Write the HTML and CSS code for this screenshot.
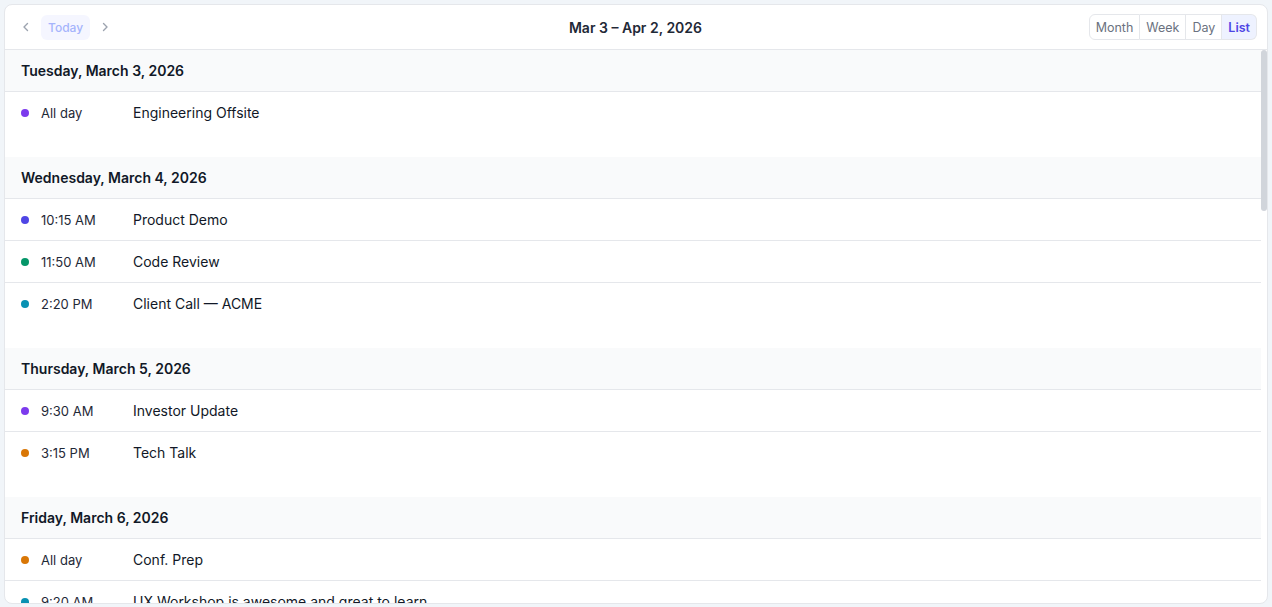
FILE: index.html
```html
<!DOCTYPE html>
<html lang="en">
<head>
    <meta charset="UTF-8">
    <meta name="viewport" content="width=device-width, initial-scale=1.0">
    <title>Calendar List</title>
    <link rel="stylesheet" href="styles.css">
</head>
<body>
    <div class="calendar">
        <div class="toolbar">
            <div class="nav">
                <button class="nav-arrow" aria-label="Previous">
                    <svg width="10" height="10" viewBox="0 0 10 10"><polyline points="6.5,1.5 3,5 6.5,8.5" fill="none" stroke="currentColor" stroke-width="1.4" stroke-linecap="round" stroke-linejoin="round"/></svg>
                </button>
                <button class="today" disabled>Today</button>
                <button class="nav-arrow" aria-label="Next">
                    <svg width="10" height="10" viewBox="0 0 10 10"><polyline points="3.5,1.5 7,5 3.5,8.5" fill="none" stroke="currentColor" stroke-width="1.4" stroke-linecap="round" stroke-linejoin="round"/></svg>
                </button>
            </div>
            <h1 class="range">Mar 3 – Apr 2, 2026</h1>
            <div class="views">
                <button>Month</button>
                <button>Week</button>
                <button>Day</button>
                <button class="active">List</button>
            </div>
        </div>

        <div class="body">
            <div class="list">
                <section class="day">
                    <h2 class="day-title">Tuesday, March 3, 2026</h2>
                    <div class="event">
                        <span class="dot purple"></span>
                        <span class="time">All day</span>
                        <span class="name">Engineering Offsite</span>
                    </div>
                </section>

                <section class="day">
                    <h2 class="day-title">Wednesday, March 4, 2026</h2>
                    <div class="event">
                        <span class="dot indigo"></span>
                        <span class="time">10:15 AM</span>
                        <span class="name">Product Demo</span>
                    </div>
                    <div class="event">
                        <span class="dot green"></span>
                        <span class="time">11:50 AM</span>
                        <span class="name">Code Review</span>
                    </div>
                    <div class="event">
                        <span class="dot cyan"></span>
                        <span class="time">2:20 PM</span>
                        <span class="name">Client Call — ACME</span>
                    </div>
                </section>

                <section class="day">
                    <h2 class="day-title">Thursday, March 5, 2026</h2>
                    <div class="event">
                        <span class="dot purple"></span>
                        <span class="time">9:30 AM</span>
                        <span class="name">Investor Update</span>
                    </div>
                    <div class="event">
                        <span class="dot amber"></span>
                        <span class="time">3:15 PM</span>
                        <span class="name">Tech Talk</span>
                    </div>
                </section>

                <section class="day">
                    <h2 class="day-title">Friday, March 6, 2026</h2>
                    <div class="event">
                        <span class="dot amber"></span>
                        <span class="time">All day</span>
                        <span class="name">Conf. Prep</span>
                    </div>
                    <div class="event">
                        <span class="dot cyan"></span>
                        <span class="time">9:20 AM</span>
                        <span class="name">UX Workshop is awesome and great to learn</span>
                    </div>
                    <div class="event">
                        <span class="dot indigo"></span>
                        <span class="time">1:00 PM</span>
                        <span class="name">Sprint Planning</span>
                    </div>
                </section>
            </div>
            <div class="scrollbar"><div class="thumb"></div></div>
        </div>
    </div>
</body>
</html>
```

FILE: styles.css
```css
* {
    margin: 0;
    padding: 0;
    box-sizing: border-box;
    font-family: Inter, 'Noto Sans', sans-serif;
}

html, body {
    height: 100%;
}

body {
    background-color: #f1f5f9;
    color: #111827;
    padding: 4px 4px 3px 4px;
}

.calendar {
    height: 100%;
    display: flex;
    flex-direction: column;
    background-color: #ffffff;
    border: 1px solid #e5e7eb;
    border-radius: 8px;
    overflow: hidden;
}

.toolbar {
    flex: none;
    height: 45px;
    display: flex;
    align-items: center;
    justify-content: space-between;
    padding: 0 10px 0 9px;
    border-bottom: 1px solid #e5e7eb;
}

.nav {
    display: flex;
    align-items: center;
    gap: 3px;
    width: 200px;
}

button {
    font-family: inherit;
    border: none;
    background: none;
    cursor: pointer;
}

.nav-arrow {
    width: 24px;
    height: 25px;
    display: flex;
    align-items: center;
    justify-content: center;
    color: #9ca3af;
}

.today {
    height: 25px;
    padding: 0 7px;
    border-radius: 6px;
    background-color: #f5f6ff;
    color: #a5b4fc;
    font-size: 12px;
    font-weight: 500;
    cursor: default;
}

.range {
    font-size: 14px;
    font-weight: 600;
    color: #1f2937;
    text-align: center;
}

.views {
    width: 200px;
    display: flex;
    justify-content: flex-end;
}

.views button {
    height: 26px;
    padding: 0 6px;
    font-size: 12.5px;
    color: #6b7280;
    border: 1px solid #e5e7eb;
    border-left: none;
    background-color: #ffffff;
}

.views button:first-child {
    border-left: 1px solid #e5e7eb;
    border-radius: 6px 0 0 6px;
}

.views button:last-child {
    border-radius: 0 6px 6px 0;
}

.views button.active {
    background-color: #eef2ff;
    color: #4f46e5;
    font-weight: 600;
}

.body {
    flex: 1;
    min-height: 0;
    display: flex;
}

.list {
    flex: 1;
    overflow: hidden;
}

.scrollbar {
    flex: none;
    width: 6px;
}

.thumb {
    height: 161px;
    background-color: #d1d5db;
    border-radius: 3px;
}

.day {
    padding-bottom: 24px;
}

.day-title {
    height: 42px;
    display: flex;
    align-items: center;
    padding-left: 16px;
    background-color: #f9fafb;
    border-bottom: 1px solid #e5e7eb;
    font-size: 14px;
    font-weight: 600;
    color: #111827;
}

.event {
    height: 42px;
    display: flex;
    align-items: center;
    padding-left: 16px;
    border-bottom: 1px solid #e5e7eb;
}

.event:last-child {
    border-bottom: none;
    height: 41px;
}

.dot {
    width: 8px;
    height: 8px;
    border-radius: 50%;
    margin-right: 12px;
    flex: none;
}

.purple { background-color: #7c3aed; }
.indigo { background-color: #4f46e5; }
.green  { background-color: #059669; }
.cyan   { background-color: #0891b2; }
.amber  { background-color: #d97706; }

.time {
    width: 92px;
    flex: none;
    font-size: 13px;
    color: #1f2937;
}

.name {
    font-size: 14px;
    color: #111827;
}
```
